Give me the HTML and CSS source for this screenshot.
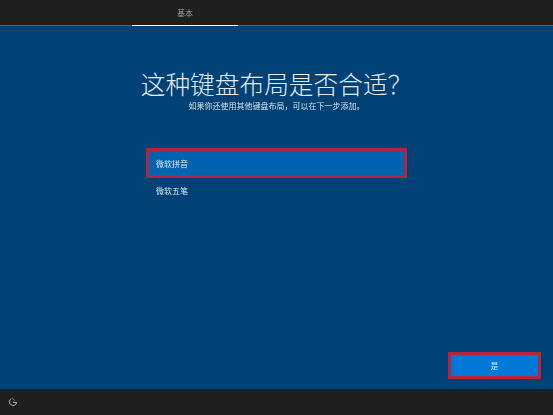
FILE: index.html
```html
<!DOCTYPE html>
<html lang="zh-CN">

<head>
    <meta charset="UTF-8">
    <title>键盘布局</title>
    <link rel="stylesheet" href="styles.css">
</head>

<body>
    <div class="topBar">
        <div class="tab">基本</div>
    </div>

    <div class="main">
        <div class="mainText">这种键盘布局是否合适&#xFF1F;</div>
        <div class="subText">如果你还使用其他键盘布局&#xFF0C;可以在下一步添加。</div>

        <div class="list">
            <div class="item selected">微软拼音</div>
            <div class="item">微软五笔</div>
        </div>

        <div class="actions">
            <button class="yesBtn"><span class="soft">是</span></button>
        </div>
    </div>

    <div class="bottomBar">
        <svg class="accessIcon" width="10" height="10" viewBox="0 0 10 10">
            <path d="M3.2 1.6 A3.7 3.7 0 1 0 8.7 5.6 L5 5.2" fill="none" stroke="#b8b8b8" stroke-width="1" />
            <path d="M4.2 1 L6.6 3.4" fill="none" stroke="#9c8c9c" stroke-width="1" />
        </svg>
    </div>
</body>

</html>
```

FILE: styles.css
```css
* {
    box-sizing: border-box;
}

body {
    margin: 0;
    width: 553px;
    height: 415px;
    display: flex;
    flex-direction: column;
    overflow: hidden;
    background-color: #004275;
    font-family: "Noto Sans CJK SC", "Liberation Sans", sans-serif;
    color: white;
}

/* top */
.topBar {
    height: 26px;
    padding-left: 132px;
    background-color: #1f1f1f;
    border-bottom: 1px solid #5a5a5a;
}

.tab {
    width: 106px;
    height: 26px;
    border-bottom: 1px solid white;
    font-size: 8px;
    line-height: 25px;
    text-align: center;
    color: #a0a0a0;
    filter: blur(0.3px);
}

/* main */
.main {
    flex: 1;
    display: flex;
    flex-direction: column;
    padding-top: 42px;
}

.mainText {
    height: 30px;
    font-size: 24.7px;
    font-weight: 300;
    line-height: 30px;
    text-align: center;
    color: #e4edf4;
}

.subText {
    height: 11px;
    margin-top: 2px;
    font-size: 8px;
    line-height: 11px;
    text-align: center;
    color: #d4e0ea;
    filter: blur(0.3px);
}

.list {
    display: flex;
    flex-direction: column;
    width: 261px;
    margin-top: 37px;
    margin-left: 146px;
}

.item {
    height: 26px;
    padding-left: 10px;
    font-size: 8px;
    line-height: 26px;
    color: #d8e4ee;
    filter: blur(0.3px);
}

.selected {
    height: 30px;
    background-color: #0063b1;
    border: 3px solid #b5233d;
    padding-left: 7px;
    line-height: 26px;
}

.actions {
    display: flex;
    justify-content: flex-end;
    margin-top: auto;
    padding-right: 12px;
    padding-bottom: 10px;
}

.yesBtn {
    width: 93px;
    height: 27px;
    padding: 0;
    background-color: #0078d7;
    border: 3px solid #b5233d;
    font-family: inherit;
    font-size: 8px;
    color: #cfe6f8;
}

.soft {
    display: inline-block;
    filter: blur(0.3px);
}

/* bottom */
.bottomBar {
    display: flex;
    align-items: center;
    height: 26px;
    padding-left: 8px;
    background-color: #1f1f1f;
}
```
